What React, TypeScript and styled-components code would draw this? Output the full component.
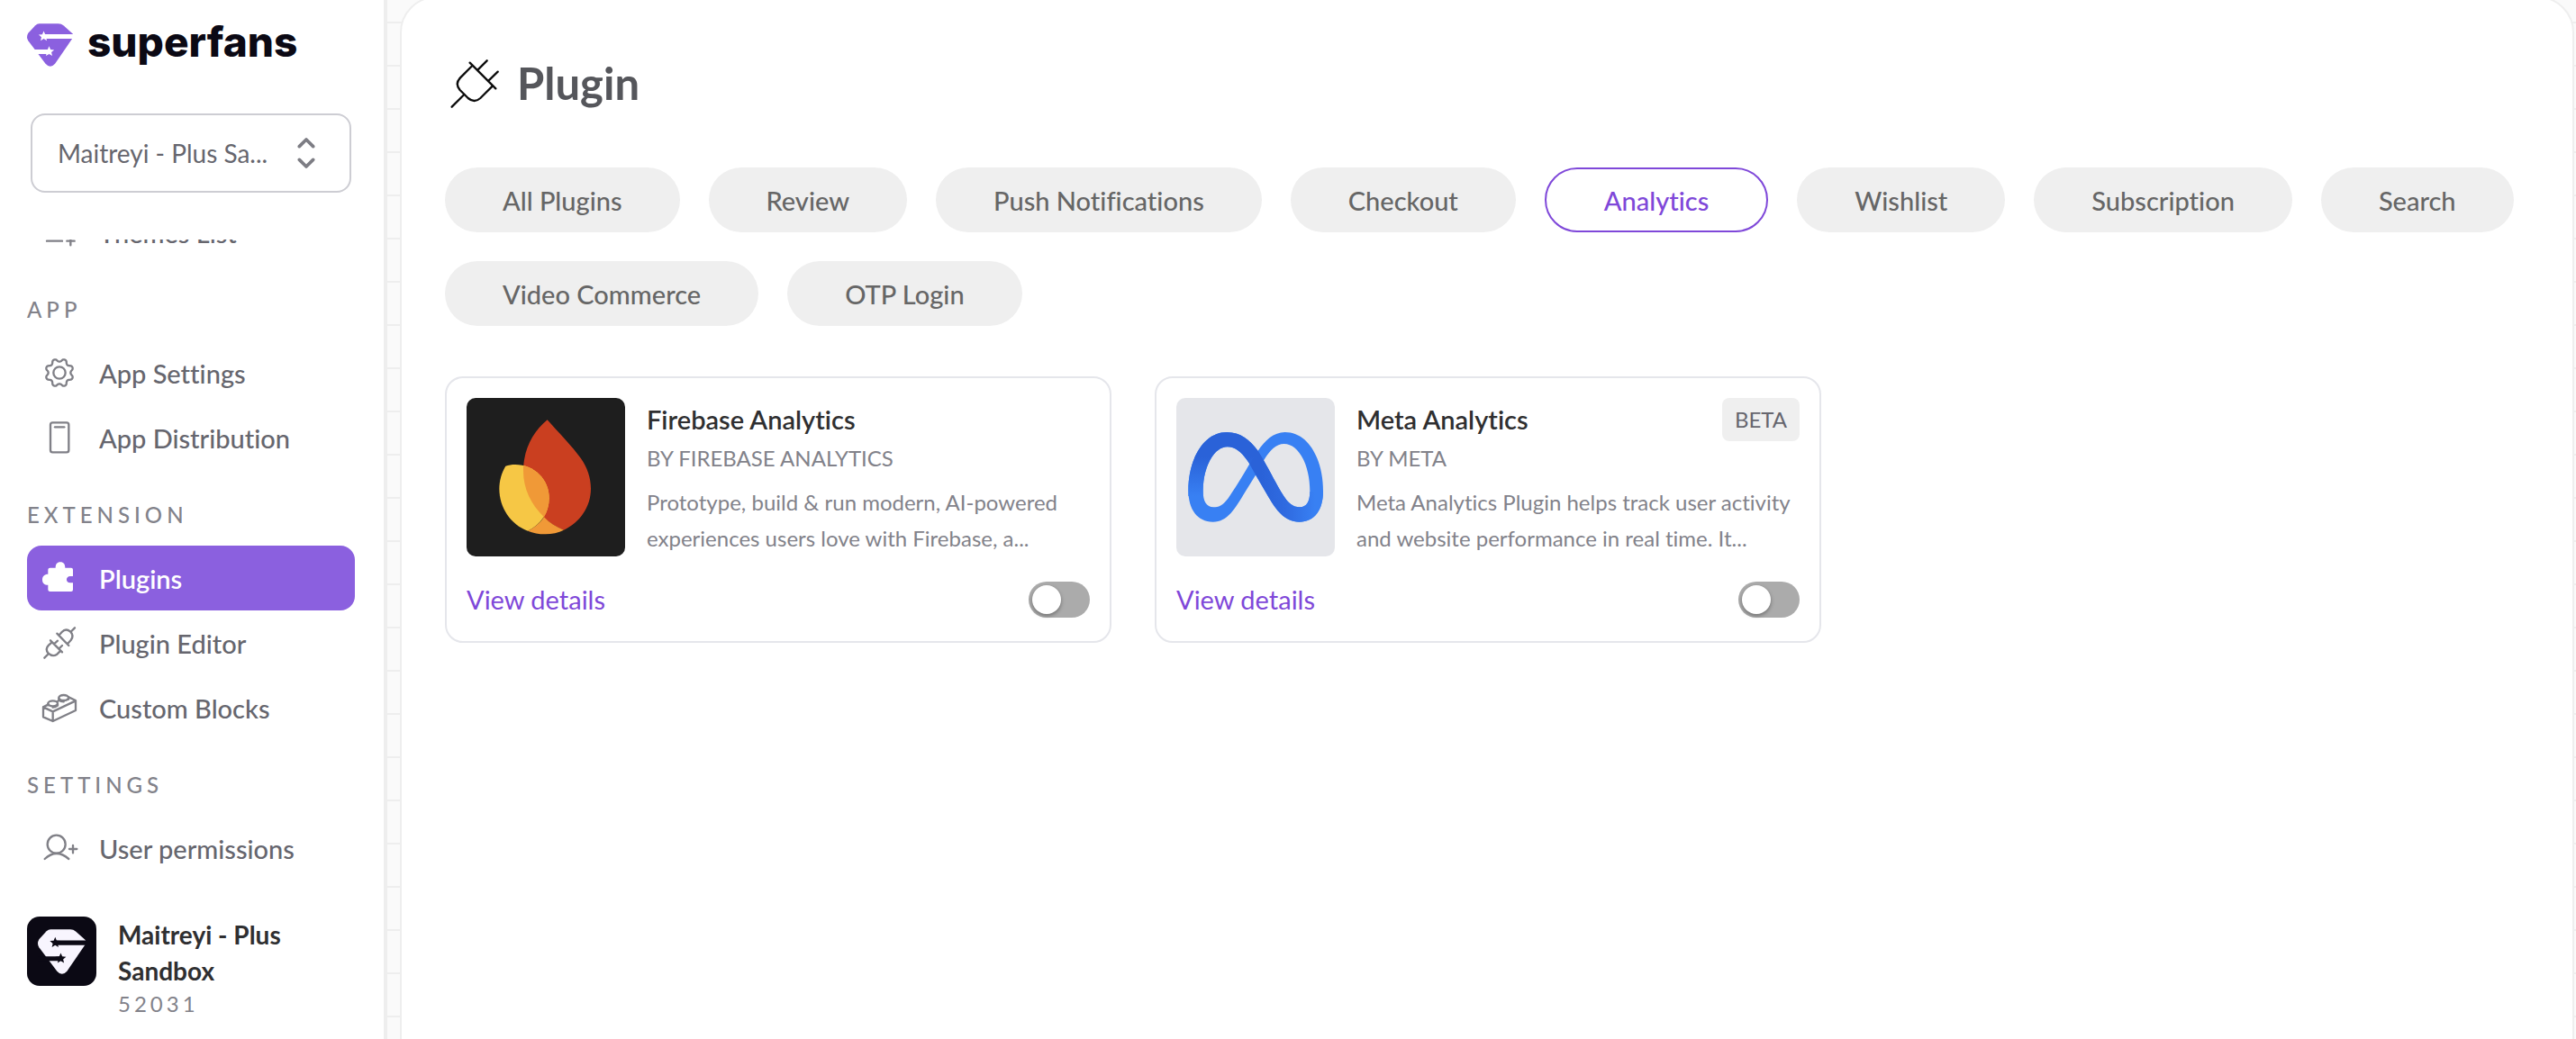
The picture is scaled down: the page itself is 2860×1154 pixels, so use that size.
import React from "react";
import styled, { createGlobalStyle } from "styled-components";

const color = {
  purple: "#8b60df",
  purpleText: "#7f48d9",
  ink: "#2f2f31",
  text: "#66666e",
  muted: "#82828a",
  icon: "#808087",
  chip: "#efefef",
  line: "#eeeeee",
  surface: "#fafafa",
  night: "#0b0914",
};

const GlobalStyle = createGlobalStyle`
  *, *::before, *::after { box-sizing: border-box; }
  body {
    margin: 0;
    overflow: hidden;
    font-family: Lato, "Open Sans", sans-serif;
    font-variant-ligatures: none;
    background: ${color.surface};
  }
  button, select, input { font: inherit; font-variant-ligatures: none; }
`;

const Shell = styled.div`
  display: flex;
  height: 100vh;
  overflow: hidden;
`;

/* ---------- sidebar ---------- */

const Sidebar = styled.aside`
  display: flex;
  flex-direction: column;
  flex: 0 0 430px;
  background: #fff;
  border-right: 4px solid ${color.line};
`;

const SidebarHead = styled.header`
  padding: 26px 32px 52px 30px;
`;

const Brand = styled.a`
  display: flex;
  align-items: flex-start;
  gap: 16px;
  height: 48px;
  color: ${color.night};
  text-decoration: none;
`;

const BrandName = styled.span`
  font: 800 46px/40px Inter, sans-serif;
`;

const StorePicker = styled.label`
  display: grid;
  align-items: center;
  margin: 52px 4px 0;

  & > * {
    grid-area: 1 / 1;
  }

  & > svg {
    justify-self: end;
    margin-right: 40px;
    pointer-events: none;
  }
`;

const StoreSelect = styled.select`
  appearance: none;
  width: 100%;
  height: 88px;
  padding: 0 80px 0 28px;
  border: 2px solid #cdcdd3;
  border-radius: 16px;
  background: #fff;
  color: ${color.text};
  font-size: 28px;
`;

const Nav = styled.nav`
  flex: 1;
  min-height: 0;
  overflow: hidden;
`;

const NavTrack = styled.div`
  margin-top: -44px;
  padding: 0 32px 0 30px;
`;

const NavHeading = styled.h2`
  margin: 0;
  padding: 32px 0 16px;
  font-size: 24px;
  line-height: 36px;
  font-weight: 500;
  letter-spacing: 5px;
  color: ${color.muted};
`;

const NavList = styled.ul`
  margin: 0;
  padding: 0;
  list-style: none;
`;

const NavLink = styled.a<{ $active?: boolean }>`
  display: flex;
  align-items: center;
  gap: 26px;
  height: 72px;
  padding-left: 18px;
  border-radius: 16px;
  font-size: 29px;
  font-weight: ${(p) => (p.$active ? 600 : 500)};
  text-decoration: none;
  color: ${(p) => (p.$active ? "#fff" : color.text)};
  background: ${(p) => (p.$active ? color.purple : "transparent")};

  & > svg {
    color: ${(p) => (p.$active ? "#fff" : color.icon)};
  }
`;

const Account = styled.footer`
  display: flex;
  gap: 24px;
  padding: 24px 30px 22px;
`;

const Avatar = styled.div`
  display: grid;
  place-items: center;
  flex: none;
  width: 77px;
  height: 77px;
  border-radius: 14px;
  background: ${color.night};
`;

const AccountName = styled.div`
  font-size: 28px;
  line-height: 40px;
  font-weight: 700;
  color: ${color.ink};
`;

const AccountId = styled.div`
  font-size: 24px;
  line-height: 34px;
  letter-spacing: 4px;
  color: ${color.muted};
`;

/* ---------- main area ---------- */

const Stage = styled.main`
  flex: 1;
  min-width: 0;
  padding: 0 2px 0 14px;
  background: repeating-linear-gradient(
      to bottom,
      transparent 0 24px,
      ${color.line} 24px 26px,
      transparent 26px 48px
    )
    ${color.surface};
`;

const Panel = styled.div`
  height: calc(100% + 48px);
  margin-top: -4px;
  padding: 64px 46px 64px 48px;
  border: 2px solid ${color.line};
  border-radius: 40px;
  background: #fff;
`;

const TitleRow = styled.div`
  display: flex;
  align-items: center;
  gap: 18px;
  height: 60px;
  padding-left: 6px;
  margin-bottom: 64px;
`;

const Title = styled.h1`
  margin: 0;
  font-size: 49px;
  line-height: 60px;
  font-weight: 700;
  color: #55565b;
`;

const Tabs = styled.div`
  display: flex;
  flex-wrap: wrap;
  gap: 32px;
  margin-bottom: 56px;
`;

const Tab = styled.button<{ $active?: boolean }>`
  height: 72px;
  padding: 0 64px;
  border: ${(p) => (p.$active ? `2px solid ${color.purpleText}` : "0")};
  border-radius: 36px;
  font-size: 29px;
  font-weight: 500;
  color: ${(p) => (p.$active ? color.purpleText : "#666666")};
  background: ${(p) => (p.$active ? "#fff" : color.chip)};
`;

const CardGrid = styled.div`
  display: grid;
  grid-template-columns: repeat(3, 1fr);
  gap: 48px;
`;

const Card = styled.article`
  padding: 22px;
  border: 2px solid #e5e6eb;
  border-radius: 20px;
`;

const CardTop = styled.div`
  display: flex;
  gap: 24px;
`;

const Thumb = styled.div<{ $bg: string }>`
  flex: none;
  width: 176px;
  height: 176px;
  border-radius: 10px;
  overflow: hidden;
  background: ${(p) => p.$bg};
`;

const CardBody = styled.div`
  flex: 1;
  min-width: 0;
`;

const CardHead = styled.div`
  display: flex;
  justify-content: space-between;
`;

const CardTitle = styled.h2`
  margin: 0;
  font-size: 29px;
  line-height: 48px;
  font-weight: 600;
  color: ${color.ink};
`;

const Badge = styled.span`
  padding: 0 14px;
  border-radius: 8px;
  font-size: 24px;
  line-height: 48px;
  color: ${color.text};
  background: ${color.chip};
`;

const Vendor = styled.div`
  margin-bottom: 10px;
  font-size: 24px;
  line-height: 38px;
  color: ${color.muted};
`;

const Blurb = styled.p`
  margin: 0;
  font-size: 24px;
  line-height: 40px;
  color: ${color.muted};
`;

const CardFoot = styled.div`
  display: flex;
  align-items: center;
  justify-content: space-between;
  height: 48px;
  margin-top: 24px;
`;

const Details = styled.a`
  font-size: 29px;
  line-height: 48px;
  color: ${color.purpleText};
  text-decoration: none;
`;

const Toggle = styled.input`
  appearance: none;
  display: flex;
  align-items: center;
  width: 68px;
  height: 40px;
  margin: 0;
  padding: 4px;
  border-radius: 20px;
  background: #ababab;

  &::before {
    content: "";
    width: 32px;
    height: 32px;
    border-radius: 50%;
    background: #fff;
    box-shadow: 0 2px 4px rgba(0, 0, 0, 0.35);
  }

  &:checked {
    justify-content: flex-end;
    background: ${color.purple};
  }
`;

/* ---------- drawings ---------- */

const star = (cx: number, cy: number, r: number) =>
  Array.from({ length: 10 }, (_, i) => {
    const a = (Math.PI / 5) * i - Math.PI / 2;
    const d = i % 2 ? r * 0.45 : r;
    return `${(cx + d * Math.cos(a)).toFixed(1)},${(cy + d * Math.sin(a)).toFixed(1)}`;
  }).join(" ");

function Mark({ width, fill, cut }: { width: number; fill: string; cut: string }) {
  return (
    <svg width={width} height={Math.round((width * 144) / 154)} viewBox="90 78 154 144" aria-hidden="true">
      <path
        fill={fill}
        d="M131 78H195Q205 78 213 85L244 113V125L184 213Q168 231 152 213L94 136Q86 124 94 110L118 84Q124 78 131 78Z"
      />
      <path fill={cut} d="M146 114H246V129H146ZM90 165H164V180H90Z" />
      <polygon fill={cut} points={star(146, 121, 18)} />
      <polygon fill={cut} points={star(164, 172, 18)} />
    </svg>
  );
}

function NavIcon({ box, children }: { box: string; children: React.ReactNode }) {
  return (
    <svg
      width="36"
      height="36"
      viewBox={box}
      overflow="visible"
      fill="none"
      stroke="currentColor"
      strokeWidth="7"
      strokeLinecap="round"
      strokeLinejoin="round"
      aria-hidden="true"
    >
      {children}
    </svg>
  );
}

const gearPath =
  "M" +
  Array.from({ length: 160 }, (_, i) => {
    const a = (Math.PI * 2 * i) / 160;
    const wave = Math.cos(8 * a);
    const r = 42 - 5 * Math.sign(wave) * Math.pow(Math.abs(wave), 0.7);
    return `${(198 + r * Math.cos(a)).toFixed(1)} ${(372 + r * Math.sin(a)).toFixed(1)}`;
  }).join("L") +
  "Z";

const icons = {
  themes: (
    <NavIcon box="144 720 108 108">
      <path d="M156 745H240M156 774H240M156 803H207M223 803H248M235 789V817" />
    </NavIcon>
  ),
  gear: (
    <NavIcon box="144 318 108 108">
      <path d={gearPath} />
      <circle cx="198" cy="372" r="20" />
    </NavIcon>
  ),
  device: (
    <NavIcon box="144 534 108 108">
      <rect x="168" y="538" width="61" height="99" rx="7" />
      <path d="M183 553H214" />
    </NavIcon>
  ),
  puzzle: (
    <NavIcon box="144 132 108 108">
      <path
        fill="currentColor"
        stroke="none"
        d="M167 152H185C185 140 190 133 201 133C212 133 217 140 217 152H237Q243 152 243 158V180H234C218 180 218 202 234 202H243V225Q243 231 237 231H167Q160 231 160 225V209C148 209 141 203 141 191C141 180 148 173 160 173V158Q160 152 167 152Z"
      />
    </NavIcon>
  ),
  connect: (
    <NavIcon box="144 348 108 108">
      <path d="M249 352L235 366M190 371L229 411M200 373L206 366Q219 352 234 364Q248 378 236 393L226 404" />
      <path d="M168 394L207 433M173 400L162 410Q149 423 161 437Q175 450 190 440L200 430M148 452L162 438M181 405L192 395M197 421L207 411" />
    </NavIcon>
  ),
  brick: (
    <NavIcon box="144 564 108 108">
      <path d="M160 608L144 616V649L176 663L252 627V594L229 583M144 616L176 631L252 595M176 631V663M190 598L197 594" />
      <ellipse cx="176" cy="604" rx="16" ry="9" />
      <ellipse cx="212" cy="585" rx="16" ry="9" />
      <path d="M160 605V610M192 605V611Q184 617 176 617M196 586V592Q202 598 212 598M228 586V590" />
    </NavIcon>
  ),
  user: (
    <NavIcon box="144 192 108 108">
      <circle cx="188" cy="233" r="30" />
      <path d="M149 282Q188 246 229 282M231 249H256M243 237V262" />
    </NavIcon>
  ),
};

function PlugIcon() {
  return (
    <svg
      width="56"
      height="56"
      viewBox="30 42 168 168"
      fill="none"
      stroke="#0c0c0c"
      strokeWidth="7"
      strokeLinecap="round"
      aria-hidden="true"
    >
      <path d="M35 206L76 165M95 59L181 145M122 82L152 52M158 118L188 89" />
      <path d="M103 69L63 109Q44 129 62 150L89 177Q110 195 130 177L171 136" />
    </svg>
  );
}

function Chevrons() {
  return (
    <svg
      width="20"
      height="36"
      viewBox="990 456 60 108"
      fill="none"
      stroke="#7d7d84"
      strokeWidth="11"
      strokeLinecap="round"
      strokeLinejoin="round"
      aria-hidden="true"
    >
      <path d="M997 488L1020 465L1043 488M997 532L1020 555L1043 532" />
    </svg>
  );
}

function FirebaseArt() {
  return (
    <svg width="176" height="176" viewBox="24 18 528 528" role="img" aria-label="Firebase">
      <path fill="#ca3f20" d="M293 91C245 130 213 190 213 262C213 350 270 430 348 458C402 432 438 380 438 320C438 285 426 250 405 220C375 178 330 133 293 91Z" />
      <path fill="#f6c745" d="M154 245C140 268 133 295 133 320C133 385 172 440 228 461C272 440 299 400 299 352C299 288 248 240 186 240C175 240 163 242 154 245Z" />
      <path fill="#f09937" d="M213 244C264 256 299 300 299 352C299 376 292 398 282 415C240 375 213 322 213 262Z" />
      <path fill="#f09937" d="M228 461C245 468 265 472 286 472C308 472 330 467 348 458C322 448 300 434 282 415C268 436 250 451 228 461Z" />
    </svg>
  );
}

function MetaArt() {
  return (
    <svg width="176" height="176" viewBox="18 18 528 528" role="img" aria-label="Meta">
      <defs>
        <linearGradient id="metaLeft" gradientUnits="userSpaceOnUse" x1="0" y1="215" x2="0" y2="345">
          <stop offset="0" stopColor="#2a62d8" />
          <stop offset="1" stopColor="#3880f3" />
        </linearGradient>
        <linearGradient id="metaRight" gradientUnits="userSpaceOnUse" x1="300" y1="0" x2="480" y2="0">
          <stop offset="0" stopColor="#2a62d8" />
          <stop offset="0.45" stopColor="#2f6ae0" />
          <stop offset="1" stopColor="#3880f3" />
        </linearGradient>
      </defs>
      <path
        fill="#3880f3"
        fillRule="evenodd"
        d="M58 325C58 225 107 132 186 132C232 132 262 158 290 194C313 160 342 132 380 132C460 132 507 225 507 328C507 392 478 431 428 431C378 431 350 390 325 348L282 275L248 330C213 387 190 431 140 431C88 431 58 390 58 325Z
           M107 327C107 245 145 181 188 181C220 181 243 208 262 238C235 285 210 325 190 353C173 376 158 382 142 382C118 382 107 362 107 327Z
           M309 226C328 195 350 171 377 171C425 171 463 240 463 330C463 362 452 382 430 382C405 382 390 366 376 345C352 308 330 262 309 226Z"
      />
      <path
        fill="url(#metaLeft)"
        d="M58 345V325C58 225 107 132 186 132C232 132 262 158 290 194L309 226L282 275L262 238C243 208 220 181 188 181C145 181 107 245 107 327V345Z"
      />
      <path
        fill="url(#metaRight)"
        d="M290 194L309 226C330 262 352 308 376 345C390 366 405 382 430 382C452 382 463 362 463 330H507C507 392 478 431 428 431C378 431 350 390 325 348L262 238Z"
      />
    </svg>
  );
}

/* ---------- content ---------- */

type NavEntry = { label: string; icon: React.ReactNode; active?: boolean };

const sections: { heading?: string; items: NavEntry[] }[] = [
  { items: [{ label: "Themes List", icon: icons.themes }] },
  {
    heading: "APP",
    items: [
      { label: "App Settings", icon: icons.gear },
      { label: "App Distribution", icon: icons.device },
    ],
  },
  {
    heading: "EXTENSION",
    items: [
      { label: "Plugins", icon: icons.puzzle, active: true },
      { label: "Plugin Editor", icon: icons.connect },
      { label: "Custom Blocks", icon: icons.brick },
    ],
  },
  { heading: "SETTINGS", items: [{ label: "User permissions", icon: icons.user }] },
];

const tabs = [
  "All Plugins",
  "Review",
  "Push Notifications",
  "Checkout",
  "Analytics",
  "Wishlist",
  "Subscription",
  "Search",
  "Video Commerce",
  "OTP Login",
];

const plugins = [
  {
    name: "Firebase Analytics",
    vendor: "BY FIREBASE ANALYTICS",
    blurb: "Prototype, build & run modern, AI-powered experiences users love with Firebase, a...",
    bg: "#1e1e1e",
    art: <FirebaseArt />,
  },
  {
    name: "Meta Analytics",
    vendor: "BY META",
    blurb: "Meta Analytics Plugin helps track user activity and website performance in real time. It...",
    bg: "#e5e6ea",
    art: <MetaArt />,
    badge: "BETA",
  },
];

export default function App() {
  const [tab, setTab] = React.useState("Analytics");
  return (
    <>
      <GlobalStyle />
      <Shell>
        <Sidebar>
          <SidebarHead>
            <Brand href="#">
              <Mark width={51} fill={color.purple} cut="#fff" />
              <BrandName>superfans</BrandName>
            </Brand>
            <StorePicker>
              <StoreSelect aria-label="Store">
                <option>Maitreyi - Plus Sa...</option>
              </StoreSelect>
              <Chevrons />
            </StorePicker>
          </SidebarHead>
          <Nav>
            <NavTrack>
              {sections.map((s, i) => (
                <section key={i}>
                  {s.heading && <NavHeading>{s.heading}</NavHeading>}
                  <NavList>
                    {s.items.map((n) => (
                      <li key={n.label}>
                        <NavLink href="#" $active={n.active}>
                          {n.icon}
                          {n.label}
                        </NavLink>
                      </li>
                    ))}
                  </NavList>
                </section>
              ))}
            </NavTrack>
          </Nav>
          <Account>
            <Avatar>
              <Mark width={53} fill="#f8f5fe" cut={color.night} />
            </Avatar>
            <div>
              <AccountName>Maitreyi - Plus Sandbox</AccountName>
              <AccountId>52031</AccountId>
            </div>
          </Account>
        </Sidebar>
        <Stage>
          <Panel>
            <TitleRow>
              <PlugIcon />
              <Title>Plugin</Title>
            </TitleRow>
            <Tabs>
              {tabs.map((t) => (
                <Tab key={t} type="button" aria-pressed={t === tab} $active={t === tab} onClick={() => setTab(t)}>
                  {t}
                </Tab>
              ))}
            </Tabs>
            <CardGrid>
              {plugins.map((p) => (
                <Card key={p.name}>
                  <CardTop>
                    <Thumb $bg={p.bg}>{p.art}</Thumb>
                    <CardBody>
                      <CardHead>
                        <CardTitle>{p.name}</CardTitle>
                        {p.badge && <Badge>{p.badge}</Badge>}
                      </CardHead>
                      <Vendor>{p.vendor}</Vendor>
                      <Blurb>{p.blurb}</Blurb>
                    </CardBody>
                  </CardTop>
                  <CardFoot>
                    <Details href="#">View details</Details>
                    <Toggle type="checkbox" aria-label={`Enable ${p.name}`} />
                  </CardFoot>
                </Card>
              ))}
            </CardGrid>
          </Panel>
        </Stage>
      </Shell>
    </>
  );
}
